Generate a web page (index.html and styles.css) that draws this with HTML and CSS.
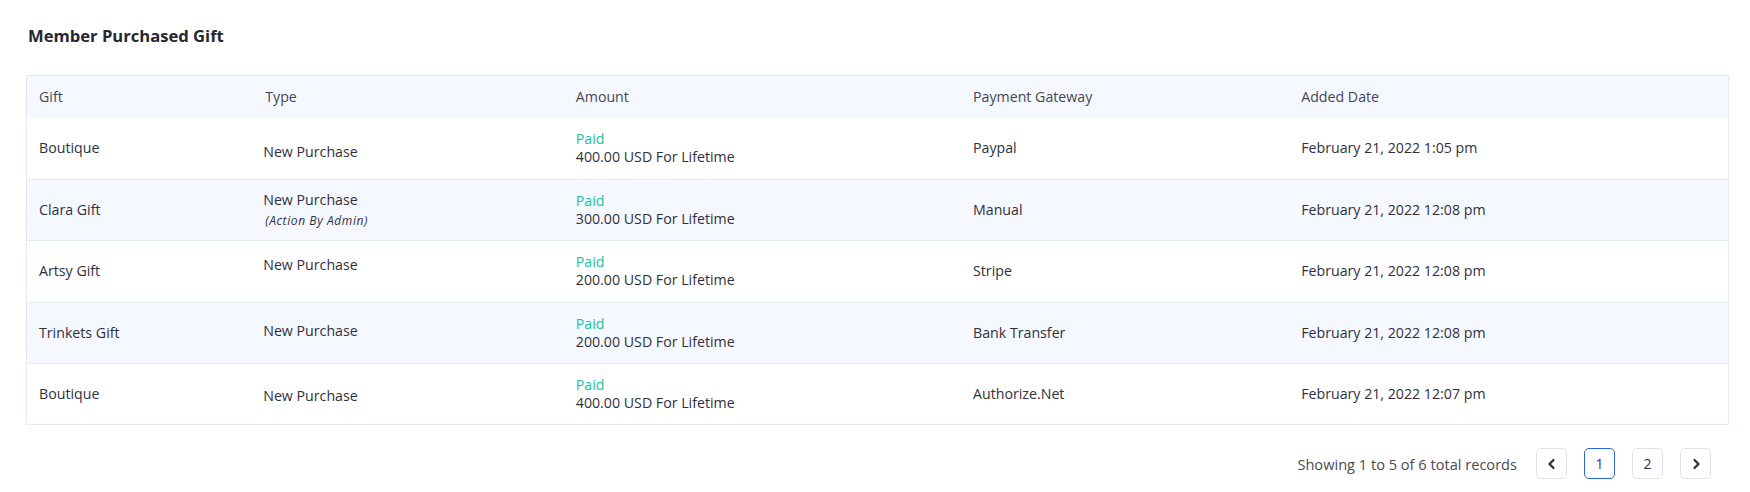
FILE: index.html
```html
<!DOCTYPE html>
<html lang="en">
<head>
<meta charset="utf-8">
<title>Member Purchased Gift</title>
<link rel="stylesheet" href="styles.css">
</head>
<body>
<main class="page">
  <h2 class="title">Member Purchased Gift</h2>
  <table class="gifts">
    <colgroup>
      <col class="col-gift">
      <col class="col-type">
      <col class="col-amount">
      <col class="col-gateway">
      <col class="col-date">
    </colgroup>
    <thead>
      <tr>
        <th>Gift</th>
        <th>Type</th>
        <th>Amount</th>
        <th>Payment Gateway</th>
        <th>Added Date</th>
      </tr>
    </thead>
    <tbody>
      <tr>
        <td>Boutique</td>
        <td class="type"><div class="np nudge-down">New Purchase</div></td>
        <td><div class="status">Paid</div><div class="amount">400.00 USD For Lifetime</div></td>
        <td>Paypal</td>
        <td>February 21, 2022 1:05 pm</td>
      </tr>
      <tr class="alt">
        <td>Clara Gift</td>
        <td class="type"><div class="np">New Purchase</div><div class="by-admin">(Action By Admin)</div></td>
        <td><div class="status">Paid</div><div class="amount">300.00 USD For Lifetime</div></td>
        <td>Manual</td>
        <td>February 21, 2022 12:08 pm</td>
      </tr>
      <tr>
        <td>Artsy Gift</td>
        <td class="type"><div class="np nudge-up-lg">New Purchase</div></td>
        <td><div class="status">Paid</div><div class="amount">200.00 USD For Lifetime</div></td>
        <td>Stripe</td>
        <td>February 21, 2022 12:08 pm</td>
      </tr>
      <tr class="alt">
        <td>Trinkets Gift</td>
        <td class="type"><div class="np nudge-up">New Purchase</div></td>
        <td><div class="status">Paid</div><div class="amount">200.00 USD For Lifetime</div></td>
        <td>Bank Transfer</td>
        <td>February 21, 2022 12:08 pm</td>
      </tr>
      <tr>
        <td>Boutique</td>
        <td class="type"><div class="np nudge-down-sm">New Purchase</div></td>
        <td><div class="status">Paid</div><div class="amount">400.00 USD For Lifetime</div></td>
        <td>Authorize.Net</td>
        <td>February 21, 2022 12:07 pm</td>
      </tr>
    </tbody>
  </table>
  <nav class="pager">
    <span class="pager-info">Showing 1 to 5 of 6 total records</span>
    <div class="pager-buttons">
      <button class="pg-btn" aria-label="Previous">
        <svg width="10" height="12" viewBox="0 0 10 12"><polyline points="6.5,2 2.5,6 6.5,10" fill="none" stroke="#2b2b36" stroke-width="2.2" stroke-linecap="round" stroke-linejoin="round"/></svg>
      </button>
      <button class="pg-btn active">1</button>
      <button class="pg-btn">2</button>
      <button class="pg-btn" aria-label="Next">
        <svg width="10" height="12" viewBox="0 0 10 12"><polyline points="3.5,2 7.5,6 3.5,10" fill="none" stroke="#2b2b36" stroke-width="2.2" stroke-linecap="round" stroke-linejoin="round"/></svg>
      </button>
    </div>
  </nav>
</main>
</body>
</html>
```
FILE: styles.css
```css
* { box-sizing: border-box; }

body {
  margin: 0;
  background: #ffffff;
  font-family: "Open Sans", "Noto Sans", sans-serif;
  color: #30303c;
}

.page {
  padding: 0 21px 0 26px;
}

.title {
  margin: 0 0 28px;
  padding: 25px 0 0 2px;
  font-size: 16.6px;
  line-height: 22px;
  font-weight: 700;
  color: #262630;
}

.gifts {
  width: 1703px;
  border-collapse: collapse;
  table-layout: fixed;
  border: 1px solid #e3e8f2;
  border-bottom: none;
  font-size: 14.2px;
}

.col-gift { width: 226.6px; }
.col-type { width: 310.4px; }
.col-amount { width: 397px; }
.col-gateway { width: 328px; }
.col-date { width: 439px; }

.gifts th {
  height: 42.5px;
  padding: 0 12px;
  background: #f5f8fe;
  text-align: left;
  font-weight: 400;
  color: #464652;
  line-height: 20px;
}

.gifts td {
  height: 61.4px;
  padding: 0 12px;
  vertical-align: middle;
  line-height: 20px;
  border-bottom: 1px solid #e6ebf3;
  color: #30303c;
}

.gifts tr.alt td { background: #f5f8fe; }

.gifts td.type { padding-left: 10px; }

.np { line-height: 20px; }
.nudge-down { padding-top: 8px; }
.nudge-down-sm { padding-top: 3px; }
.nudge-up { padding-bottom: 3px; }
.nudge-up-lg { padding-bottom: 12px; }

.by-admin {
  font-size: 12px;
  line-height: 21px;
  font-style: italic;
  letter-spacing: 0.6px;
  padding-left: 2px;
  color: #30303c;
}

.status {
  color: #1dbf9f;
  line-height: 18px;
}

.amount { line-height: 18px; }

.pager {
  display: flex;
  justify-content: flex-end;
  align-items: center;
  gap: 19px;
  margin-top: 23px;
  padding-right: 18px;
}

.pager-info {
  font-size: 14.6px;
  color: #4a4a56;
}

.pager-buttons {
  display: flex;
  gap: 17px;
}

.pg-btn {
  width: 31px;
  height: 31px;
  padding: 0;
  display: flex;
  align-items: center;
  justify-content: center;
  background: #ffffff;
  border: 1px solid #dde2ea;
  border-radius: 5px;
  font-family: "Open Sans", "Noto Sans", sans-serif;
  font-size: 14px;
  color: #30303c;
}

.pg-btn.active {
  border-color: #2a64dc;
  color: #263a6e;
}
```
